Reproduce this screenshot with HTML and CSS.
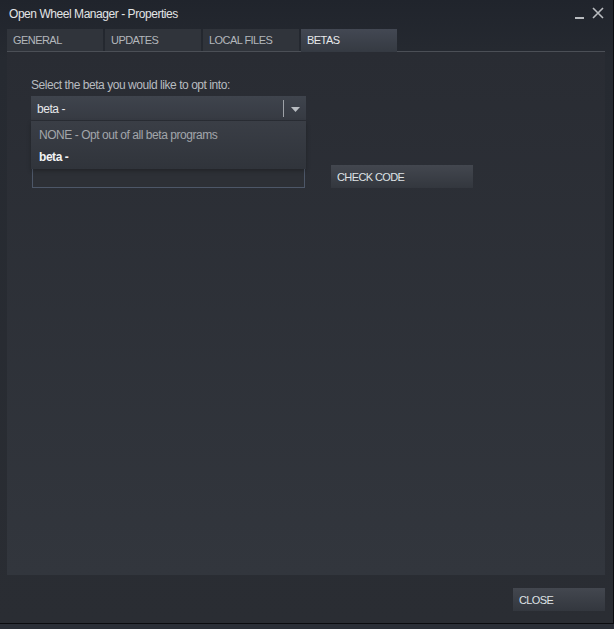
FILE: index.html
```html
<!DOCTYPE html>
<html>
<head>
<meta charset="utf-8">
<title>Open Wheel Manager - Properties</title>
<link rel="stylesheet" href="styles.css">
</head>
<body>
<div class="window">
  <div class="titlebar">
    <span class="title">Open Wheel Manager - Properties</span>
    <div class="winctl">
      <span class="min"></span>
      <svg class="close-x" width="12" height="12" viewBox="0 0 12 12"><path d="M1 1 L11 11 M11 1 L1 11" stroke="#b9bcc0" stroke-width="1.6" fill="none"/></svg>
    </div>
  </div>
  <div class="tabs">
    <div class="tab">GENERAL</div>
    <div class="tab">UPDATES</div>
    <div class="tab">LOCAL FILES</div>
    <div class="tab active">BETAS</div>
  </div>
  <div class="panel">
    <div class="label">Select the beta you would like to opt into:</div>
    <div class="beta-area">
      <div class="dropdown">
        <span class="dd-value">beta -</span>
        <span class="dd-sep"></span>
        <svg class="dd-arrow" width="9" height="5" viewBox="0 0 9 5"><path d="M0 0 H9 L4.5 5 Z" fill="#b9bdc2"/></svg>
      </div>
      <div class="code-row">
        <div class="code-input"></div>
        <div class="btn check">CHECK CODE</div>
      </div>
      <div class="dd-list">
        <div class="dd-item">NONE - Opt out of all beta programs</div>
        <div class="dd-item selected">beta -</div>
      </div>
    </div>
  </div>
  <div class="footer">
    <div class="btn closebtn">CLOSE</div>
  </div>
</div>
<div class="behind"><span>ently it starts with lad off for hiking. Driving around on the short map is 100%</span></div>
</body>
</html>
```
FILE: styles.css
```css
html, body {
  margin: 0;
  padding: 0;
}
body {
  background: #2b2f37;
  font-family: "Liberation Sans", Arial, sans-serif;
  width: 614px;
  height: 629px;
  overflow: hidden;
}
.window {
  width: 613px;
  height: 623px;
  border-right: 1px solid #0b0c0f;
  border-bottom: 1px solid #0b0c0f;
  background: linear-gradient(to bottom, #20242c 0px, #262a31 60px, #2a2d33 100%);
  display: flex;
  flex-direction: column;
}
.titlebar {
  height: 29px;
  display: flex;
  align-items: center;
  padding-left: 9px;
  padding-right: 9px;
}
.title {
  color: #e2e4e6;
  font-size: 12px;
  letter-spacing: -0.45px;
  flex: 1;
  margin-top: -2px;
}
.winctl {
  display: flex;
  align-items: flex-end;
  gap: 8px;
  margin-top: -4px;
}
.min {
  width: 9px;
  height: 2px;
  background: #b9bcc0;
}
.tabs {
  display: flex;
  gap: 2px;
  padding-left: 7px;
  height: 22px;
  position: relative;
  z-index: 1;
}
.tab {
  width: 96px;
  height: 22px;
  background: #30343b;
  color: #b3b7bb;
  font-size: 11px;
  letter-spacing: -0.55px;
  box-sizing: border-box;
  padding-left: 6px;
  line-height: 22px;
}
.tab.active {
  background: linear-gradient(to bottom, #434853 0%, #353a42 100%);
  color: #e8eaec;
  height: 23px;
}
.panel {
  margin-left: 7px;
  width: 598px;
  height: 524px;
  border-top: 1px solid #4b4f56;
  box-sizing: border-box;
  background: linear-gradient(to bottom, #292c33 0%, #32363d 100%);
  padding: 26px 0 0 24px;
}
.label {
  color: #b8bcc0;
  font-size: 12px;
  letter-spacing: -0.45px;
  height: 18px;
}
.beta-area {
  position: relative;
}
.dropdown {
  width: 275px;
  height: 24px;
  background: linear-gradient(to bottom, #3f444d 0%, #363a42 100%);
  display: flex;
  align-items: center;
  box-sizing: border-box;
  padding-left: 6px;
  padding-top: 2px;
}
.dd-value {
  color: #e6e8ea;
  font-size: 12px;
  letter-spacing: -0.45px;
  flex: 1;
}
.dd-sep {
  width: 1px;
  height: 17px;
  background: #9ea2a8;
  margin-right: 7px;
  margin-top: -2px;
}
.dd-arrow {
  margin-right: 6px;
}
.code-row {
  display: flex;
  align-items: flex-end;
  gap: 26px;
  margin-top: 45px;
  margin-left: 1px;
}
.code-input {
  width: 273px;
  height: 23px;
  box-sizing: border-box;
  border: 1px solid #4d5768;
  border-top: none;
  background: #2d3036;
}
.btn {
  background: linear-gradient(to bottom, #43474f 0%, #33373e 100%);
  color: #dfe3e6;
  font-size: 11px;
  letter-spacing: -0.6px;
  height: 23px;
  line-height: 24px;
  box-sizing: border-box;
  padding-left: 6px;
}
.check {
  width: 142px;
}
.dd-list {
  position: absolute;
  left: 0;
  top: 25px;
  width: 275px;
  height: 48px;
  background: linear-gradient(to bottom, #3a3e46 0%, #30343b 100%);
  box-shadow: 0 2px 4px rgba(0,0,0,0.25);
  padding-top: 3px;
  box-sizing: border-box;
}
.dd-item {
  height: 22px;
  line-height: 22px;
  padding-left: 8px;
  font-size: 12px;
  letter-spacing: -0.45px;
  color: #a2a6ab;
}
.dd-item.selected {
  color: #f2f3f4;
  font-weight: bold;
}
.footer {
  display: flex;
  justify-content: flex-end;
  padding: 13px 8px 0 0;
}
.closebtn {
  width: 92px;
}
.behind {
  height: 5px;
  overflow: hidden;
  padding-left: 22px;
  color: #8d9197;
  font-size: 16px;
  line-height: 20px;
  white-space: nowrap;
}
.behind span {
  display: block;
  margin-top: 2px;
}
```
